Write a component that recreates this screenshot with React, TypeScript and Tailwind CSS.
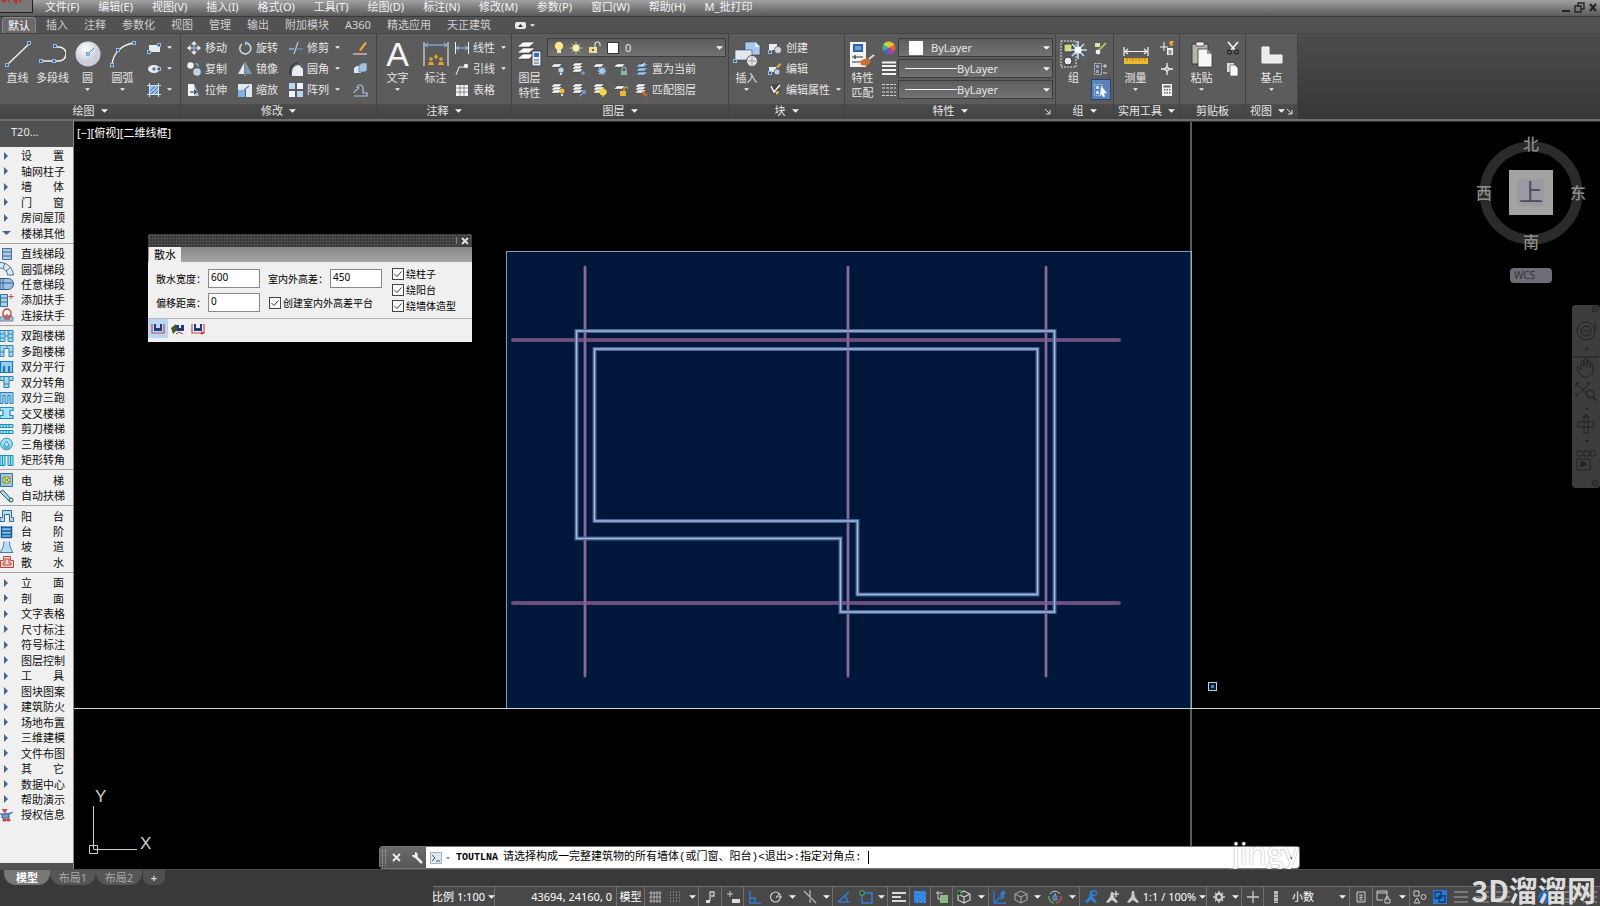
import { clsx } from "clsx";
import type { ReactNode } from "react";

const W = "#f2f2f2";
const B = "#8fc1f5";

const sheet = (x: number, y: number) => (
  <path d={`M${x + 3} ${y}h8l-3 3h-8z`} fill="#fff" stroke="#333" strokeWidth=".4" />
);
const stack = (
  <>
    {sheet(0, 1)}
    {sheet(0, 4)}
    {sheet(0, 7)}
  </>
);
const node = (x: number, y: number) => (
  <rect x={x - 1.5} y={y - 1.5} width="3" height="3" fill="#3f5873" stroke="#8fbbe8" />
);

/* [width, height, drawing] */
const art: Record<string, [number, number, ReactNode]> = {
  line: [26, 26, <><path d="M3 23 24 3" stroke={W} strokeWidth="1.4" />{node(2, 24)}{node(24, 2)}</>],
  polyline: [27, 26, <><path d="M2 20h18a7 7 0 0 0 0-14h-4" fill="none" stroke={W} strokeWidth="1.5" />{node(2, 20)}{node(15, 20)}{node(16, 5)}</>],
  circle: [26, 26, <><defs><radialGradient id="ball" cx=".4" cy=".3"><stop stopColor="#fff" /><stop offset="1" stopColor="#c8cedb" /></radialGradient></defs><circle cx="13" cy="13" r="12.5" fill="url(#ball)" /><path d="M13 13l6-6" stroke="#5d8fc7" /><rect x="11.500" y="11.500" width="3" height="3" fill="#9cc3ee" stroke="#5d8fc7" strokeWidth=".7" /></>],
  arc: [26, 26, <><path d="M2 24C3 13 10 4 24 2" fill="none" stroke={W} strokeWidth="1.4" />{node(2, 24)}{node(8, 9)}{node(24, 2)}</>],
  rect: [14, 14, <><rect x="2" y="4" width="11" height="7" fill="#e8ebf0" />{node(2, 11)}{node(12, 4)}</>],
  ellipse: [14, 14, <><ellipse cx="7" cy="7" rx="6" ry="4" fill="#e8ebf0" /><path d="M7 5v4M5 7h4" stroke="#456" />{node(12, 7)}</>],
  hatch: [14, 14, <><rect x="3" y="3" width="8" height="8" fill="#9dbfe4" /><path d="M3 8l5-5M4 11l7-7M8 11l3-3" stroke="#3d73ad" /><path d="M2.500 0v14M11.500 0v14M0 2.500h14M0 11.500h14" stroke="#cfe3f7" /></>],
  move: [14, 14, <><path d="M7 0l3 3.500H4zM7 14l3-3.500H4zM0 7l3.500-3v6zM14 7l-3.500-3v6z" fill="#e8eef6" /><path d="M7 3v8M3 7h8" stroke={W} /><rect x="5.500" y="5.500" width="3" height="3" fill="#6ca0d8" /></>],
  rotate: [14, 14, <><path d="M8.500 2A5.500 5.500 0 1 1 4 3" fill="none" stroke="#d6dde6" strokeWidth="1.500" /><path d="M7 0l4 2-4 2.500z" fill={B} /></>],
  trim: [14, 14, <><path d="M0 8h5" stroke={B} strokeWidth="1.300" /><path d="M8 8h6" stroke="#5d8fc7" strokeWidth="1.300" /><path d="M5 13 9 1" stroke="#a8c6e6" strokeWidth="1.300" /></>],
  erase: [15, 14, <><path d="M6 9l6-8 2 1-6 8z" fill="#e9a63a" /><path d="M4 12l2-3 2 1.500-2 2z" fill="#b8462c" /><path d="M0 13h14" stroke={W} /></>],
  copy: [14, 14, <><circle cx="3.500" cy="3.500" r="3.200" fill="#f4f4f4" /><circle cx="10" cy="10" r="3.800" fill="#bcd3ee" /><path d="M8 2h3v3" fill="none" stroke={B} /></>],
  mirror: [14, 14, <><path d="M6 1v11H0z" fill="#e4e8ee" /><path d="M8 1v11h6z" fill="#7f9cbc" /><path d="M7 0v14" stroke="#c9d8ea" strokeWidth=".7" /></>],
  fillet: [14, 14, <><path d="M3 14V10a7 7 0 0 1 7-7l4 4v7z" fill="#e9edf3" /><path d="M1 13V9a8 8 0 0 1 8-8" fill="none" stroke="#20344c" strokeWidth="1.200" /></>],
  explode: [15, 14, <><path d="M1 6l3-2h4v7H1z" fill="#d9e6f3" /><path d="M6 3l3-2h5v7l-2 2H6z" fill="#a3c0dd" stroke="#45617f" strokeWidth=".6" /></>],
  stretch: [14, 14, <><path d="M1 1h6v12H1z" fill="#f4f4f4" /><path d="M7 1l5 12H7z" fill="#a9c7e8" /><path d="M3 9h6M7 7l2.500 2L7 11" fill="none" stroke="#222" /></>],
  scale: [14, 14, <><path d="M0 1h14v13H8V7H0z" fill="#dfe8f2" /><rect x="0" y="7" width="7" height="7" fill="#7fb1e8" /><path d="M6 7l5-4" stroke="#27496f" /></>],
  array: [14, 14, <><path d="M0 0h6v6H0zM8 8h6v6H8z" fill="#b7d4f3" /><path d="M8 0h6v6H8zM0 8h6v6H0z" fill="#f0f3f7" /></>],
  offset: [15, 14, <path d="M1 13h13v-3h-4V5a3 3 0 0 0-6 0M1 10c0-4 5-2 5-6" fill="none" stroke="#a9c8e8" strokeWidth="1.200" />],
  dim: [26, 26, <><path d="M1 1v24M25 1v24" stroke={W} /><path d="M2 4h22M5 2L2 4l3 2M21 2l3 2-3 2" fill="none" stroke={B} /><path d="M13 13l2 3-2 2-2-2zM7 16l3 1-1 3-3-1zM19 16l-3 1 1 3 3-1zM6 21h4l1 3H5zM20 21h-4l-1 3h6z" fill="#e8a628" /></>],
  linear: [14, 14, <><path d="M.5 1v12M13.500 1v12" stroke={W} /><path d="M1 7h12M4 5L1 7l3 2M10 5l3 2-3 2" fill="none" stroke={B} /></>],
  leader: [14, 14, <><path d="M1 13l3-8h5" fill="none" stroke={W} /><circle cx="11" cy="4" r="2.200" fill={W} /></>],
  table: [14, 14, <><path d="M1 2h12v11H1z" fill="#f4f4f4" /><path d="M1 5h12M1 9h12M5 2v11M9 2v11" stroke="#777" strokeWidth=".8" /></>],
  layerProps: [26, 26, <><path d="M6 1h12l-6 5H0zM6 7h12l-6 5H0zM6 13h12l-6 5H0z" fill="#fff" stroke="#333" strokeWidth=".6" /><path d="M15 10h9v15h-9z" fill="#e8edf5" stroke="#345" /><path d="M17 12h5v4h-5z" fill="#3f6db2" /><path d="M17 19h5M17 22h5" stroke="#555" /></>],
  layOff: [14, 14, <>{sheet(0, 2)}<circle cx="10" cy="8" r="2.600" fill="#b5d7f8" /><path d="M9 11h2v2H9z" fill="#ddd" /></>],
  layIso: [14, 14, <>{stack}<circle cx="11" cy="11" r="1.800" fill="#6fa4dc" /></>],
  layFrz: [14, 14, <>{sheet(0, 2)}<path d="M9 5v8M5 9h8M6 6l6 6M12 6l-6 6" stroke="#a7d0f7" strokeWidth="1.300" /></>],
  layLock: [14, 14, <>{sheet(0, 2)}<path d="M8 9V7a2 2 0 0 1 4 0v2" fill="none" stroke="#9cc" /><rect x="7" y="9" width="6" height="4" fill="#8cb4a8" /></>],
  layCur: [14, 14, <><path d="M4 2h9l-4 3H1zM4 6h9l-4 3H1zM4 10h9l-4 3H1z" fill="#9dc3ea" stroke="#2c4d70" strokeWidth=".5" /><path d="M6 4l4-3" stroke="#fff" /></>],
  layOn: [14, 14, <>{stack}<circle cx="11" cy="8" r="2.500" fill="#f3b93c" /><path d="M10 11h2v2h-2z" fill="#ddd" /></>],
  layUniso: [14, 14, <>{stack}<path d="M8 13l5-5M10 8h3v3" fill="none" stroke="#6fa4dc" strokeWidth="1.300" /></>],
  layThaw: [14, 14, <>{stack}<circle cx="10" cy="9" r="3.500" fill="#f5d64a" /><path d="M10 4v10M5 9h10" stroke="#f5d64a" /></>],
  layUnlock: [14, 14, <>{sheet(0, 3)}<path d="M10 8V6a2 2 0 0 1 4 0" fill="none" stroke="#f0b43c" /><rect x="6" y="8" width="6" height="5" fill="#f0b43c" /></>],
  layMatch: [14, 14, <>{stack}<path d="M7 8l6 3-2 3-4-3z" fill="#d0652c" /></>],
  insert: [28, 27, <><path d="M12 1h11l4 4v9H12z" fill="#a9c8ef" stroke="#345" strokeWidth=".6" /><path d="M22 1v5h5" fill="#dcebfa" /><path d="M2 9h17v10H2z" fill="#e4e7ee" stroke="#345" strokeWidth=".6" /><circle cx="19" cy="20" r="5.500" fill="#e6e8ec" stroke="#555" /><path d="M15 20h8M19 16v8" stroke="#999" />{node(2, 20)}</>],
  create: [14, 14, <><path d="M1 3h8v6H1z" fill="#e8ecf2" /><circle cx="10" cy="9" r="3.500" fill="#cfd9e6" stroke="#444" strokeWidth=".6" />{node(2, 11)}</>],
  editBlock: [14, 14, <><path d="M1 5h7v5H1z" fill="#e8ecf2" /><circle cx="9" cy="10" r="3" fill="#b9cfe8" stroke="#444" strokeWidth=".6" /><path d="M8 5l4-4 1.500 1.500-4 4z" fill="#e8a63c" />{node(2, 11)}</>],
  attr: [14, 14, <><path d="M1 2l4 10 8-3-3-8z" fill="#444" /><path d="M3 3l3 6 6-7" fill="none" stroke={W} strokeWidth="1.600" /><path d="M7 9l5-1-3 4z" fill="#f1c13a" /></>],
  matchProps: [27, 27, <><path d="M1 1h16v25H1z" fill="#f3f4f7" /><path d="M4 3h10v8H4z" fill="#2f62a5" /><path d="M6 5h6v4H6z" fill="#6fa0da" /><path d="M3 16h11M3 21h8M6 14v4" stroke="#333" strokeWidth="1.200" /><path d="M11 20l7-3 4 3-4 5-6-1z" fill="#c9702c" /><path d="M20 18l5-4" stroke="#ddd" strokeWidth="2" /></>],
  wheel: [14, 14, <><path d="M7 7V.5A6.500 6.500 0 0 1 12.600 4z" fill="#f3b43c" /><path d="M7 7l5.600-3a6.500 6.500 0 0 1 0 6.300z" fill="#e4603a" /><path d="M7 7l5.600 3.200A6.500 6.500 0 0 1 7 13.500z" fill="#b53f9c" /><path d="M7 7v6.500A6.500 6.500 0 0 1 1.400 10z" fill="#4a63c8" /><path d="M7 7l-5.600 3a6.500 6.500 0 0 1 0-6.300z" fill="#3fae8c" /><path d="M7 7L1.400 3.800A6.500 6.500 0 0 1 7 .5z" fill="#b8d84c" /></>],
  weights: [14, 15, <path d="M0 1.500h14M0 5h14M0 9h14M0 13h14" stroke={W} strokeWidth="2" />],
  types: [14, 14, <path d="M0 1.500h14M0 5h14M0 9h14M0 12.500h14" stroke="#d8d8d8" strokeDasharray="3 1" />],
  group: [27, 28, <><path d="M1 1h15v26H1z" fill="none" stroke="#ddd" strokeDasharray="2 1" /><path d="M4 4h8v8H4z" fill="#d6d980" stroke="#333" /><circle cx="8" cy="21" r="4" fill="#e6e9f0" stroke="#333" /><path d="M18 1v18M9 10h18M12 4l12 12M24 4 12 16" stroke="#bfe3fb" strokeWidth="1.500" /><circle cx="18" cy="10" r="3.500" fill="#fff" /></>],
  groupEdit: [14, 14, <><path d="M1 2h5v4H1z" fill="#dfe1b0" /><circle cx="4" cy="11" r="2.400" fill={W} /><path d="M5 9l7-7" stroke="#b9b45c" strokeWidth="2" /></>],
  ungroup: [14, 14, <><path d="M.5 1.500h7v11h-7z" fill="none" stroke="#b9c8d8" strokeDasharray="2 1" /><path d="M2 3h3v3H2zM2 8h3v3H2z" fill="#86a8cc" /><path d="M9 4h4M11 2v4M9 11h4" stroke="#ddd" /></>],
  groupSel: [14, 14, <><path d="M.5 1.500h8v11h-8z" fill="none" stroke="#9fb9d6" strokeDasharray="2 1" /><path d="M2 3h3v3H2zM2 8h3v3H2z" fill="#c9dbee" /><path d="M7 3l6 7-3 .5 1 3-2 .5-1-3-2 2z" fill="#fff" /></>],
  measure: [26, 26, <><path d="M1 6v9M25 6v9M2 10.500h22M5 8l-3 2.500L5 13M21 8l3 2.500-3 2.500" fill="none" stroke={W} strokeWidth="1.200" /><path d="M1 17h24v6H1z" fill="#f0b92e" /><path d="M4 17v3M7 17v2M10 17v3M13 17v2M16 17v3M19 17v2M22 17v3" stroke="#8a6410" strokeWidth=".8" /></>],
  quickCalc: [14, 14, <><path d="M4 1v9M0 6h8" stroke={W} /><path d="M7 7h6v7H7z" fill={W} /><path d="M8 10h4M8 12h4M10 9v5" stroke="#555" strokeWidth=".7" /><path d="M10 0h4l-2 3h2l-4 3 1-3H9z" fill="#f1b02c" /></>],
  point: [14, 14, <><path d="M7 1v12M1 7h12" stroke={W} strokeWidth="1.300" /><circle cx="7" cy="7" r="2" fill="#aaa" stroke={W} /></>],
  calc: [14, 14, <><path d="M2 1h10v12H2z" fill={W} /><path d="M3.500 2.500h7v2h-7zM4 6h1.500v1.500H4zM6.500 6H8v1.500H6.500zM9 6h1.500v1.500H9zM4 9h1.500v1.500H4zM6.500 9H8v1.500H6.500zM9 9h1.500v1.500H9z" fill="#666" /></>],
  paste: [22, 27, <><path d="M1 3h16v20H1z" fill="#b9b3ac" stroke="#3a3a3a" /><path d="M5 1h8v4H5z" fill="#f0f0f0" stroke="#444" strokeWidth=".8" /><path d="M7 8h9l5 5v13H7z" fill="#f7f7f7" stroke="#333" strokeWidth=".8" /><path d="M16 8v5h5z" fill="#999" /></>],
  cut: [14, 14, <><path d="M2 1l7 8M12 1L5 9" stroke={W} strokeWidth="1.700" /><circle cx="3.500" cy="11" r="2" fill="none" stroke="#2c2c2c" strokeWidth="1.300" /><circle cx="10.500" cy="11" r="2" fill="none" stroke="#2c2c2c" strokeWidth="1.300" /></>],
  copyClip: [14, 14, <><path d="M1 1h7v9H1z" fill="#ddd" /><path d="M4 3h5l3 3v8H4z" fill="#f7f7f7" stroke="#555" strokeWidth=".7" /></>],
  base: [22, 26, <path d="M1 6h7v8h13v8H1z" fill="#e9eaed" stroke="#f8f8f8" />],
  bulb: [10, 14, <><circle cx="5" cy="5" r="4.200" fill="#fbe88a" /><path d="M3 8h4v4H3z" fill="#efe6b8" /></>],
  sun: [12, 12, <><path d="M6 0v12M0 6h12M2 2l8 8M10 2l-8 8" stroke="#cfc995" /><circle cx="6" cy="6" r="3.500" fill="#f1ecb0" /></>],
  unlock: [13, 13, <><path d="M7 6V3.500a2.500 2.500 0 0 1 5 0V5" fill="none" stroke="#ddd" strokeWidth="1.200" /><path d="M1 6h8v6H1z" fill="#f0dc90" /><path d="M4 8h2v2H4z" fill="#665" /></>],

  // status bar
  sGrid: [14, 14, <path d="M3 1v12M6 1v12M9 1v12M12 1v12M1 3h12M1 7h12M1 11h12" stroke="#b8b8b8" strokeWidth=".9" />],
  sDots: [14, 14, <path d="M1 2h12M1 5h12M1 8h12M1 11h12" stroke="#a8a8a8" strokeDasharray="1 2" />],
  sInfer: [14, 14, <><path d="M7 11V2h4v4H8" fill="none" stroke="#ccc" strokeWidth="1.300" /><path d="M3 10h4v3H3z" fill="#ddd" /></>],
  sDyn: [14, 14, <><path d="M1 4h6M4 1v6" stroke="#ccc" /><path d="M6 9h8v4H6z" fill="#ddd" /></>],
  sOrtho: [14, 14, <path d="M2 1v12h11M2 8h5v5" fill="none" stroke="#2f7dd8" strokeWidth="1.400" />],
  sPolar: [14, 14, <><circle cx="6.500" cy="7" r="5" fill="none" stroke="#ccc" strokeWidth="1.200" /><path d="M7 7h6M7 7l3-3" stroke="#ccc" /></>],
  sIso: [14, 14, <path d="M1 1l12 12M7 0v6M7 9v4" stroke="#bbb" strokeWidth="1.200" />],
  sTrack: [14, 14, <path d="M1 12h12M1 12 12 2M8 5l3 7" fill="none" stroke="#2f7dd8" strokeWidth="1.500" />],
  sSnap: [14, 14, <><path d="M3 3h10v10H3z" fill="none" stroke="#2f7dd8" strokeWidth="1.500" /><path d="M1 1h4v4H1z" fill="#333" stroke="#4fae5c" /></>],
  sLw: [16, 14, <path d="M1 3h14M1 7h9M1 11h14" stroke="#d8d8d8" strokeWidth="2" />],
  sTrans: [14, 14, <><path d="M1 1h12v12H1z" fill="#3b8eea" /><path d="M1 5l4-4M1 9l8-8M1 13 13 1M5 13l8-8M9 13l4-4" stroke="#1c4d8a" strokeDasharray="1 1" /></>],
  sCycle: [14, 14, <><path d="M5 5h8v8H5z" fill="#8fb583" /><path d="M1 3h7M3 1v8h3" fill="none" stroke="#ccc" /></>],
  sCube: [14, 14, <><path d="M7 1l6 3v6l-6 3-6-3V4zM1 4l6 3 6-3M7 7v6" fill="none" stroke="#ccc" strokeWidth="1.200" /><path d="M0 1h4v4H0z" fill="#333" stroke="#4fae5c" /></>],
  sUcs: [14, 14, <><path d="M1 1v12h12M1 13l6-6" fill="none" stroke="#2f7dd8" strokeWidth="1.300" /><path d="M10 0l3 3-3 3 2 1-5 3 1-4-1-2z" fill="#2f7dd8" /></>],
  sCube2: [14, 14, <path d="M7 1l6 3v6l-6 3-6-3V4zM1 4l6 3 6-3M7 7v6" fill="none" stroke="#aaa" />],
  sGizmo: [14, 14, <><path d="M2 4a6 6 0 0 1 10 0" fill="none" stroke="#ccc" /><path d="M1 6a6 6 0 0 0 5 7" fill="none" stroke="#5cae5c" strokeWidth="1.300" /><path d="M13 6a6 6 0 0 1-5 7" fill="none" stroke="#d0524c" strokeWidth="1.300" /><path d="M7 3v7M5 7l2-3 2 3v3H5z" fill="none" stroke="#5f9fe8" /></>],
  sAnno: [14, 14, <><path d="M6 1h2l1 6 4 5-2 1-4-3-4 3-2-1 4-5z" fill="#2f7dd8" /><circle cx="10" cy="3" r="2.500" fill="none" stroke="#2f7dd8" strokeWidth="1.300" /></>],
  sAnno2: [14, 14, <><path d="M6 2h2l1 5 4 5-2 1-4-3-4 3-2-1 4-5z" fill="#ccc" /><path d="M11 1v6M8 4h6" stroke="#ccc" strokeWidth="1.500" /></>],
  sAnno3: [14, 14, <path d="M6 1h2l1 6 4 5-2 1-4-3-4 3-2-1 4-5z" fill="#c8c8c8" />],
  sGear: [12, 12, <><circle cx="6" cy="6" r="3.200" fill="none" stroke="#ccc" strokeWidth="2.400" /><path d="M6 0v2M6 10v2M0 6h2M10 6h2M2 2l1 1M9 9l1 1M2 10l1-1M9 3l1-1" stroke="#ccc" strokeWidth="1.500" /></>],
  sPlus: [14, 14, <path d="M7 1v12M1 7h12" stroke="#ccc" strokeWidth="1.300" />],
  sBar: [6, 14, <path d="M3 1v12" stroke="#bbb" strokeWidth="4" strokeDasharray="3 .5" />],
  sProps: [10, 12, <><path d="M1 1h8v10H1z" fill="none" stroke="#ccc" /><path d="M3 4h4M3 6.500h4M3 9h4M5 4v5" stroke="#ccc" strokeWidth=".8" /></>],
  sLock: [16, 14, <><path d="M11 8V1H1v9h6M1 3h10" fill="none" stroke="#ccc" /><path d="M9 9h5v4H9zM10 9V7h3" fill="none" stroke="#ccc" /></>],
  sShapes: [14, 14, <><path d="M1 1h5v5H1zM4 8l3 5H1z" fill="none" stroke="#ccc" /><circle cx="10.500" cy="7" r="2.500" fill="none" stroke="#ccc" /></>],
  sIsolate: [14, 14, <><path d="M0 0h14v14H0z" fill="#2b77d0" /><path d="M2 2h6v6H2zM6 6h6v6H6z" fill="none" stroke="#0f3a73" strokeWidth="1.300" /></>],
  sMenu: [14, 14, <path d="M0 2h14M0 7h14M0 12h14" stroke="#aaa" />],
  sSlash: [14, 14, <path d="M2 12l8-9" stroke="#999" />],
  sDisc: [16, 14, <circle cx="8" cy="7" r="6.500" fill="#1f6fd6" />],
  sScreen: [16, 14, <path d="M1 2h14v10H1zM1 9h9" fill="none" stroke="#bbb" />],

  // side menu
  st1: [14, 14, <path d="M2.500 1.500h9v11h-9zM2 5h10M2 9h10" fill="#a9cbe9" stroke="#456d99" />],
  st2: [14, 14, <path d="M0 .5c8 0 13 6 13.500 12.500h-6C7.500 9 4 6 0 6M5 1L3 7M11 5L6 9" fill="#dbe9f5" stroke="#4a6f92" />],
  st3: [14, 14, <path d="M0 1.500h8a5 5 0 0 1 0 11H0zM3 2v10M0 6h13" fill="#9fc1e4" stroke="#3a5d8c" />],
  st4: [14, 14, <><path d="M.5 1.500h7v12h-7zM0 5h8M0 9h8" fill="#a9d5ec" stroke="#2f6e8f" /><path d="M11 1v5M8.500 3.500h5" stroke="#c44" /></>],
  st5: [14, 14, <><path d="M0 9h13v4H0z" fill="#a9c6e6" stroke="#6986ab" /><path d="M3 8V5a4 4 0 0 1 8 0v3H9v4M3 8h2v4M7 12V6" fill="none" stroke="#b0483c" strokeWidth="1.300" /></>],
  sa: [14, 14, <path d="M0 1.500h5v11H0zM8 1.500h5v11H8zM0 5h5M0 9h5M8 5h5M8 9h5M5 1.500h3M5 7h3" fill="#9fd8f4" stroke="#2f86b5" />],
  sb: [14, 14, <path d="M0 1.500h13v11H9v-8H4v8H0zM0 8h4M9 8h4M7 1v3" fill="#9fd8f4" stroke="#3f83a8" />],
  sc: [14, 14, <path d="M.5 1.500h12v11H9.500v-6h-1v6h-4v-6h-1v6h-3z" fill="#8ed1f4" stroke="#2476ad" strokeWidth="1.200" />],
  sd: [14, 14, <path d="M0 1.500h13v4H9v7H4v-7H0zM4 9h5M4 2v3M9 2v3" fill="#a3daf5" stroke="#2f7fae" />],
  se: [14, 14, <path d="M0 1.500h13v11h-3v-8H8v8H5v-8H3v8H0z" fill="#8ed1f4" stroke="#2f7fae" />],
  sf: [14, 14, <path d="M0 1.500h13v3h-3v5h3v3H0v-3h3v-5H0z" fill="#a5e2f6" stroke="#1e90b8" strokeWidth="1.200" />],
  sg: [14, 14, <path d="M0 2.500h13v3H0zM0 8.500h13v3H0zM3 2v4M6 2v4M9 2v4M3 8v4M6 8v4M9 8v4" fill="#a5e2f6" stroke="#1e90b8" />],
  sh: [14, 14, <><circle cx="6.500" cy="7" r="5.800" fill="#a5e2f6" stroke="#1e90b8" /><path d="M6.500 4l3 5h-6zM3 11h7" fill="#e6f7fc" stroke="#1e90b8" /></>],
  si: [14, 14, <path d="M0 2.500h5v10H0zM8 2.500h5v10H8zM5 2.500h3M2.500 3v9M10.500 3v9" fill="#9be0f5" stroke="#1e8fb8" />],
  lift: [14, 14, <><path d="M.5 .5h12v13H.5z" fill="#9fc9e8" stroke="#3d6f96" /><path d="M3 4h7v6H3z" fill="#f2ef86" stroke="#7e8a3a" /><path d="M4 5l5 4M9 5L4 9" stroke="#56793e" /></>],
  escal: [14, 14, <><path d="M0 3l3-2 9 10-2 2z" fill="#a9d6ea" stroke="#355f7a" /><circle cx="11" cy="11" r="2" fill="#cde5c8" stroke="#355" /></>],
  balcony: [14, 14, <path d="M2.500 1.500h9v7h2v4h-4v-7h-5v7H0v-4h2.500z" fill="#b5ddf2" stroke="#336a92" />],
  steps: [14, 14, <><path d="M1.500 1h10v12h-10z" fill="#7fc0e6" /><path d="M1.500 1v12M11.500 1v12M2 2.500h9M2 6h9M2 9.500h9M2 12.500h9" fill="none" stroke="#1c5a95" strokeWidth="1.500" /></>],
  ramp: [14, 14, <path d="M4 1.500C4 6 2 10 0 12.500h13C11 10 9.500 6 9.500 1.500" fill="#b9dcf2" stroke="#447da8" />],
  apron: [14, 14, <path d="M.5 12.500v-7h3v-4h7v4h3v7zM3 10V8h2V4h4v4h2v2z" fill="#f0d3cf" stroke="#b2483f" />],
  cart: [14, 14, <><path d="M0 6h10l3-2M2 6v4h7V6" fill="#7aa0d0" stroke="#385f92" /><path d="M2 1l3 4 2-4M3 11h3v2H3zM7 11h3v2H7z" fill="#d44b4b" stroke="#a33" strokeWidth=".7" /></>],
};

function Icon({ name }: { name: string }) {
  const [w, h, drawing] = art[name];
  return (
    <svg width={w} height={h} viewBox={`0 0 ${w} ${h}`} fill="none" className="shrink-0" aria-hidden="true">
      {drawing}
    </svg>
  );
}

function Caret({ small }: { small?: boolean }) {
  return (
    <svg
      viewBox="0 0 8 4"
      className={clsx("shrink-0 fill-gray-100", small ? "h-[3px] w-[5px]" : "h-1 w-[7px]")}
      aria-hidden="true"
    >
      <path d="M0 0h8L4 4z" />
    </svg>
  );
}

function Panel({ title, width, caret = true, launcher, children }: {
  title: string;
  width: string;
  caret?: boolean;
  launcher?: boolean;
  children: ReactNode;
}) {
  return (
    <section className={clsx("flex shrink-0 flex-col border-r border-[#434343] bg-[#5c5c5c]", width)}>
      <div className="flex h-[70px] pt-[3px]">{children}</div>
      <button className="relative flex h-[15px] items-center justify-center gap-[6px] bg-linear-to-b from-[#4b4b4b] to-[#444] pb-[2px]">
        <span>{title}</span>
        {caret && <Caret />}
        {launcher && (
          <svg width="6" height="6" viewBox="0 0 6 6" className="absolute bottom-1 right-1" aria-hidden="true">
            <path d="M0 0l5 5M5 1v4H1" fill="none" stroke="#ddd" />
          </svg>
        )}
      </button>
    </section>
  );
}

function BigButton({ icon, label, width = "w-[35px]", caret, children }: {
  icon?: string;
  label: string[];
  width?: string;
  caret?: boolean;
  children?: ReactNode;
}) {
  return (
    <button className={clsx("flex shrink-0 flex-col items-center pt-[3px]", width)}>
      <span className="flex h-7 items-center justify-center">{icon ? <Icon name={icon} /> : children}</span>
      <span className="mt-[2px] flex flex-col leading-[15px]">
        {label.map((l) => (
          <span key={l}>{l}</span>
        ))}
      </span>
      {caret && <span className="mt-[3px]"><Caret small /></span>}
    </button>
  );
}

type Tool = { icon: string; label?: string; caret?: boolean };

function ToolColumn({ tools, width, active }: { tools: Tool[]; width?: string; active?: string }) {
  return (
    <div className={clsx("flex shrink-0 flex-col", width)}>
      {tools.map((t) => (
        <button
          key={t.icon}
          aria-label={t.label ?? t.icon}
          className={clsx(
            "flex h-[21px] items-center gap-1 whitespace-nowrap",
            !t.label && !t.caret && "justify-center",
            active === t.icon && "border border-[#27456e] bg-[#5b83bb]"
          )}
        >
          <Icon name={t.icon} />
          {t.label && <span>{t.label}</span>}
          {t.caret && <span className="ml-[2px]"><Caret small /></span>}
        </button>
      ))}
    </div>
  );
}

function Combo({ label, value, children }: { label: string; value: string; children?: ReactNode }) {
  return (
    <div className="relative flex h-[19px] items-center border border-[#3d3d3d] bg-linear-to-b from-[#5d5d5d] to-[#727272] pl-[6px]">
      {children}
      <select aria-label={label} className="h-full min-w-0 flex-1 appearance-none bg-transparent outline-none">
        <option>{value}</option>
      </select>
      <span className="pointer-events-none absolute right-[2px] top-0 flex h-full items-center"><Caret /></span>
    </div>
  );
}

function Ribbon() {
  return (
    <div className="flex overflow-hidden border-b-2 border-[#6f6f6f] bg-linear-to-b from-[#4c4c4c] to-[#373737]">
      <Panel title="绘图" width="w-[181px]">
        <BigButton icon="line" label={["直线"]} />
        <BigButton icon="polyline" label={["多段线"]} />
        <BigButton icon="circle" label={["圆"]} caret />
        <BigButton icon="arc" label={["圆弧"]} caret />
        <ToolColumn
          width="ml-[7px]"
          tools={[{ icon: "rect", caret: true }, { icon: "ellipse", caret: true }, { icon: "hatch", caret: true }]}
        />
      </Panel>
      <Panel title="修改" width="w-[196px] [&>div]:pl-[6px]">
        <ToolColumn
          width="w-[51px]"
          tools={[{ icon: "move", label: "移动" }, { icon: "copy", label: "复制" }, { icon: "stretch", label: "拉伸" }]}
        />
        <ToolColumn
          width="w-[51px]"
          tools={[{ icon: "rotate", label: "旋转" }, { icon: "mirror", label: "镜像" }, { icon: "scale", label: "缩放" }]}
        />
        <ToolColumn
          width="w-16"
          tools={[
            { icon: "trim", label: "修剪", caret: true },
            { icon: "fillet", label: "圆角", caret: true },
            { icon: "array", label: "阵列", caret: true },
          ]}
        />
        <ToolColumn tools={[{ icon: "erase" }, { icon: "explode" }, { icon: "offset" }]} />
      </Panel>
      <Panel title="注释" width="w-[135px]">
        <BigButton label={["文字"]} width="w-[41px]" caret>
          <span className="font-['Liberation_Sans'] text-[34px] leading-[34px] text-gray-100">A</span>
        </BigButton>
        <BigButton icon="dim" label={["标注"]} />
        <ToolColumn
          width="ml-[2px]"
          tools={[
            { icon: "linear", label: "线性", caret: true },
            { icon: "leader", label: "引线", caret: true },
            { icon: "table", label: "表格" },
          ]}
        />
      </Panel>
      <Panel title="图层" width="w-[217px]">
        <BigButton icon="layerProps" label={["图层", "特性"]} />
        <div className="w-[179px]">
          <div className="flex h-[21px] flex-col justify-center">
            <Combo label="图层" value="0">
              <span className="mr-[6px] flex items-center gap-[6px]">
                <Icon name="bulb" />
                <Icon name="sun" />
                <Icon name="unlock" />
                <span className="size-3 border border-[#333] bg-white" />
              </span>
            </Combo>
          </div>
          {[
            { icons: ["layOff", "layIso", "layFrz", "layLock", "layCur"], label: "置为当前" },
            { icons: ["layOn", "layUniso", "layThaw", "layUnlock", "layMatch"], label: "匹配图层" },
          ].map((row) => (
            <div key={row.label} className="flex h-[21px] items-center">
              {row.icons.map((i) => (
                <button key={i} aria-label={i} className="flex w-[21px] justify-center">
                  <Icon name={i} />
                </button>
              ))}
              <button>{row.label}</button>
            </div>
          ))}
        </div>
      </Panel>
      <Panel title="块" width="w-[116px]">
        <BigButton icon="insert" label={["插入"]} caret />
        <ToolColumn
          width="ml-1"
          tools={[
            { icon: "create", label: "创建" },
            { icon: "editBlock", label: "编辑" },
            { icon: "attr", label: "编辑属性", caret: true },
          ]}
        />
      </Panel>
      <Panel title="特性" width="w-[211px]" launcher>
        <BigButton icon="matchProps" label={["特性", "匹配"]} />
        <ToolColumn width="w-[18px]" tools={[{ icon: "wheel" }, { icon: "weights" }, { icon: "types" }]} />
        <div className="flex w-[155px] flex-col gap-[2px] pt-px">
          <Combo label="颜色" value="ByLayer">
            <span className="mx-1 mr-2 size-[14px] bg-white" />
          </Combo>
          <Combo label="线宽" value="ByLayer">
            <span className="h-px w-[52px] bg-gray-100" />
          </Combo>
          <Combo label="线型" value="ByLayer">
            <span className="h-px w-[52px] bg-gray-100" />
          </Combo>
        </div>
      </Panel>
      <Panel title="组" width="w-[58px]">
        <BigButton icon="group" label={["组"]} />
        <ToolColumn
          width="w-5"
          active="groupSel"
          tools={[{ icon: "groupEdit" }, { icon: "ungroup" }, { icon: "groupSel" }]}
        />
      </Panel>
      <Panel title="实用工具" width="w-[66px]">
        <BigButton icon="measure" label={["测量"]} width="w-[43px]" caret />
        <ToolColumn width="w-5" tools={[{ icon: "quickCalc" }, { icon: "point" }, { icon: "calc" }]} />
      </Panel>
      <Panel title="剪贴板" width="w-[66px]" caret={false}>
        <BigButton icon="paste" label={["粘贴"]} width="w-[43px]" caret />
        <ToolColumn width="w-5" tools={[{ icon: "cut" }, { icon: "copyClip" }]} />
      </Panel>
      <Panel title="视图" width="w-[52px] [&>button]:pr-2" launcher>
        <BigButton icon="base" label={["基点"]} width="w-[51px]" caret />
      </Panel>
    </div>
  );
}

const MENUS = [
  "文件(F)", "编辑(E)", "视图(V)", "插入(I)", "格式(O)", "工具(T)", "绘图(D)",
  "标注(N)", "修改(M)", "参数(P)", "窗口(W)", "帮助(H)", "M_批打印",
];

const TABS = [
  "默认", "插入", "注释", "参数化", "视图", "管理", "输出", "附加模块", "A360", "精选应用", "天正建筑",
];

// [label, icon] - no icon means a collapsed group
const SIDE_MENU: [string, string?][][] = [
  [["设置"], ["轴网柱子"], ["墙体"], ["门窗"], ["房间屋顶"], ["楼梯其他", "open"]],
  [["直线梯段", "st1"], ["圆弧梯段", "st2"], ["任意梯段", "st3"], ["添加扶手", "st4"], ["连接扶手", "st5"]],
  [
    ["双跑楼梯", "sa"], ["多跑楼梯", "sb"], ["双分平行", "sc"], ["双分转角", "sd"], ["双分三跑", "se"],
    ["交叉楼梯", "sf"], ["剪刀楼梯", "sg"], ["三角楼梯", "sh"], ["矩形转角", "si"],
  ],
  [["电梯", "lift"], ["自动扶梯", "escal"]],
  [["阳台", "balcony"], ["台阶", "steps"], ["坡道", "ramp"], ["散水", "apron"]],
  [
    ["立面"], ["剖面"], ["文字表格"], ["尺寸标注"], ["符号标注"], ["图层控制"], ["工具"], ["图块图案"],
    ["建筑防火"], ["场地布置"], ["三维建模"], ["文件布图"], ["其它"], ["数据中心"], ["帮助演示"], ["授权信息", "cart"],
  ],
];

function SideMenu() {
  return (
    <aside className="flex w-[74px] shrink-0 flex-col border-r border-[#8a8a8a] bg-[#515151] pb-[6px]">
      <h2 className="h-[26px] shrink-0 pl-[11px] leading-[22px] text-gray-200">T20...</h2>
      <nav className="flex min-h-0 flex-1 flex-col bg-[#f0f0f0] pb-10 pt-px text-[#111]">
        {SIDE_MENU.map((group, g) => (
          <div key={g} className="contents">
            {g > 0 && <hr className="my-[2px] shrink-0 border-[#a3a3a3]" />}
            {group.map(([label, icon]) => (
              <button key={label} className="flex min-h-0 flex-1 items-center">
                <span className="flex w-[21px] shrink-0 items-center">
                  {icon && icon !== "open" ? (
                    <Icon name={icon} />
                  ) : (
                    <svg width="10" height="8" viewBox="0 0 10 8" className="ml-[2px]" fill="#44678f" aria-hidden="true">
                      <path d={icon ? "M0 2h9L4.500 6z" : "M2 0l4 4-4 4z"} />
                    </svg>
                  )}
                </span>
                <span className="flex w-[43px] justify-between whitespace-nowrap leading-none">
                  {label.length === 2 ? [...label].map((c) => <span key={c}>{c}</span>) : label}
                </span>
              </button>
            ))}
          </div>
        ))}
      </nav>
    </aside>
  );
}

function Check({ label }: { label: string }) {
  return (
    <label className="flex items-center gap-[2px] whitespace-nowrap leading-4">
      <span className="relative size-3">
        <input type="checkbox" defaultChecked className="peer block size-3 appearance-none border border-[#444] bg-white" />
        <svg viewBox="0 0 12 12" className="pointer-events-none absolute inset-0 hidden peer-checked:block" aria-hidden="true">
          <path d="M2.500 6l2.500 2.500 4.500-5" fill="none" stroke="#333" />
        </svg>
      </span>
      {label}
    </label>
  );
}

function Field({ id, label, value }: { id: string; label: string; value: string }) {
  return (
    <div className="flex h-[19px] items-center justify-between gap-[2px]">
      <label htmlFor={id} className="whitespace-nowrap">{label}</label>
      <input id={id} defaultValue={value} className="h-[19px] w-[52px] border border-[#888] bg-white px-[2px] pb-[3px] outline-none" />
    </div>
  );
}

function ApronDialog() {
  return (
    <div
      role="dialog"
      aria-label="散水"
      className="absolute left-[74px] top-[112px] w-[324px] overflow-hidden rounded-t bg-[#f0f0f0] text-[10px] text-black"
    >
      <div className="flex h-[13px] items-center justify-end gap-1 bg-[#3d3d3d] bg-[radial-gradient(#6a6a6a_1px,transparent_1px)] bg-[size:3px_3px] pr-[3px]">
        <span className="h-[7px] w-px bg-[#888]" />
        <button aria-label="关闭" className="bg-[#3d3d3d]">
          <svg width="8" height="8" viewBox="0 0 8 8" aria-hidden="true"><path d="M1 1l6 6M7 1L1 7" stroke="#ddd" strokeWidth="2" /></svg>
        </button>
      </div>
      <div className="flex h-[15px] bg-linear-to-b from-[#878787] to-[#a5a5a5] pl-px">
        <button className="bg-[#f0f0f0] px-[5px] text-[11px] leading-[15px]">散水</button>
      </div>
      <div className="flex h-14 gap-[10px] px-2">
        <div className="grid grid-cols-[104px_114px] content-start gap-x-2 gap-y-[5px] pt-[7px]">
          <Field id="apron-width" label="散水宽度：" value="600" />
          <Field id="level-diff" label="室内外高差：" value="450" />
          <Field id="offset-dist" label="偏移距离：" value="0" />
          <div className="flex h-[19px] items-center pl-px"><Check label="创建室内外高差平台" /></div>
        </div>
        <div className="pt-1">
          <Check label="绕柱子" />
          <Check label="绕阳台" />
          <Check label="绕墙体造型" />
        </div>
      </div>
      <div className="flex h-6 border-t border-[#b5b5b5]">
        {["任意绘制", "选择已有路径", "搜索自动生成"].map((name, i) => (
          <button
            key={name}
            aria-label={name}
            className={clsx("flex h-[19px] w-5 items-center justify-center", i === 0 && "bg-[#bcd6f2]")}
          >
            <svg width="14" height="12" viewBox="0 0 14 12" fill="none" aria-hidden="true">
              {i === 1 ? (
                <><path d="M4 2h9v6H5z" fill="#203a86" /><path d="M0 5l5-4 1 6-4 4z" fill="#4a5a24" /><path d="M5 11l3-2 4 2" stroke="#a33" /><path d="M8 2v3h2V2z" fill="#f0f0f0" /></>
              ) : (
                <><path d="M3 1v7h8V1H9v4H5V1z" fill="#203a86" /><path d="M1 1v9h12V1" stroke="#c04858" strokeWidth="1.200" /></>
              )}
              {i === 2 && <circle cx="11" cy="10" r="1.500" fill="#d33" />}
            </svg>
          </button>
        ))}
      </div>
    </div>
  );
}

function Compass() {
  return (
    <div className="absolute right-4 top-2 w-[106px]">
      <svg width="110" height="126" viewBox="0 0 110 126" className="-ml-[2px] block font-['Noto_Sans_CJK_SC']">
        <circle cx="55" cy="63" r="46.500" fill="none" stroke="#2b2b2b" strokeWidth="10" />
        <rect x="33" y="40" width="44" height="45" fill="#a3a3a1" />
        <rect x="41" y="49" width="27" height="27" fill="#9a9aa4" />
        <text x="55" y="71" textAnchor="middle" fontSize="24" fill="#4c4c58">上</text>
        <g fontSize="16" fontWeight="500" fill="#8d8d8d" textAnchor="middle">
          <text x="55" y="20">北</text>
          <text x="102" y="69">东</text>
          <text x="55" y="118">南</text>
          <text x="8" y="69">西</text>
        </g>
      </svg>
      <button className="mx-auto mt-3 block h-[15px] w-[42px] rounded bg-[#6d6d78] pl-1 text-left text-[10px] leading-[13px] text-[#33333c]">
        WCS
      </button>
    </div>
  );
}

function NavBar() {
  return (
    <div className="absolute right-0 top-[183px] w-7 rounded bg-[#3d3d3d]">
      <svg width="28" height="183" viewBox="0 0 28 183" fill="none" stroke="#222" aria-hidden="true">
        <circle cx="23" cy="4" r="3" /><path d="M21 4h4" />
        <circle cx="14" cy="26" r="9" /><circle cx="14" cy="26" r="5" /><path d="M23 16v9M11 26h6" />
        <path d="M13 43h4l-2 2zM13 103h4l-2 2zM13 135h4l-2 2z" fill="#222" stroke="none" />
        <path d="M1 52h26" />
        <path d="M7 68c-2-3-3-5-1-6l3 3V57c1-2 2-1 3 0v5-7c1-2 3-1 3 0v7-6c1-1 3-1 3 1v6-4c1-1 3-1 3 1v5c0 5-3 7-7 7-3 0-5-1-7-4z" />
        <path d="M4 78l14 14M18 78 4 92M4 78h4M4 78v4M18 78h-4M4 92v-4" /><circle cx="18" cy="89" r="4" /><path d="M21 92l3 3" strokeWidth="2" />
        <path d="M12 111h4v17h-4zM6 117h16v5H6z" /><path d="M14 109l-3 3h6z" />
        <path d="M5 146h5v5H5zM12 146h5v5h-5zM19 146h4v5h-4zM5 154h13v11H5z" /><path d="M9 156l6 3-6 3z" fill="#222" />
        <circle cx="23" cy="178" r="3" /><path d="M21 178h4" />
      </svg>
    </div>
  );
}

function Drawing() {
  const walls = [
    "M502.500 209H980.500V490H766.500V416.500H502.500z",
    "M520.500 227H963.500V472.500H783.500V399H520.500z",
  ];
  const axes = "M511 145V554M774 145V554M972 145V554";
  const rows = "M439 218H1045M439 481H1045";
  return (
    <svg className="absolute inset-0 size-full" fill="none" aria-hidden="true">
      <rect x="432.500" y="129.500" width="685" height="457" fill="#00173c" stroke="#7f9fb8" />
      <g strokeLinecap="round">
        <path d={rows} stroke="#67497a" strokeWidth="4" />
        <path d={axes} stroke="#6b5781" strokeWidth="3" />
        <path d={axes} stroke="#a583a6" strokeWidth="1" />
        <path d={rows} stroke="#7d5685" strokeWidth="1" />
      </g>
      {walls.map((d) => (
        <g key={d}>
          <path d={d} stroke="#47628f" strokeWidth="4" />
          <path d={d} stroke="#a3b9df" strokeWidth="1.500" />
        </g>
      ))}
      <path d="M1117 0V747" stroke="#b4b4b4" />
      <line x1="0" y1="586.500" x2="100%" y2="586.500" stroke="#d4d4d4" />
      <rect x="1134.500" y="560.500" width="8" height="8" fill="#0b1d33" stroke="#b9d3ea" />
      <rect x="1137" y="563" width="3" height="3" fill="#4c86c4" />
    </svg>
  );
}

function CommandLine() {
  return (
    <div className="absolute bottom-0 left-[305px] right-[300px] flex h-[23px] items-center rounded border border-[#777] bg-white text-black">
      <div className="flex h-full w-[46px] items-center gap-[10px] bg-linear-to-b from-[#6b6b6b] to-[#565656] pl-[2px]">
        <span className="-mr-1 h-4 w-1 border-x border-dotted border-[#aaa]" />
        <button aria-label="关闭">
          <svg width="9" height="9" viewBox="0 0 9 9" aria-hidden="true"><path d="M1 1l7 7M8 1L1 8" stroke="#eee" strokeWidth="1.800" /></svg>
        </button>
        <button aria-label="自定义">
          <svg width="12" height="12" viewBox="0 0 12 12" aria-hidden="true">
            <path d="M4 4l7 7" stroke="#eee" strokeWidth="2.500" />
            <path d="M1 3a3 3 0 0 0 5 2 3 3 0 0 0-2-5v2.500L3 3z" fill="#eee" />
          </svg>
        </button>
      </div>
      <svg width="20" height="12" viewBox="0 0 20 12" className="ml-1 shrink-0" aria-hidden="true">
        <path d="M.5 .5h11v11H.5z" fill="#dde6ee" stroke="#a9b4c0" />
        <path d="M2 3l3 3-3 3M6 9h4" fill="none" stroke="#4a5a70" />
        <path d="M16 5h4l-2 2.500z" fill="#888" />
      </svg>
      <label htmlFor="command" className="ml-[6px] whitespace-pre font-['Liberation_Mono','Noto_Sans_CJK_SC',monospace] text-[11px]">
        <b className="mr-[5px] text-[10px]">TOUTLNA</b>
        请选择构成一完整建筑物的所有墙体(或门窗、阳台)&lt;退出&gt;:指定对角点:
      </label>
      <span className="ml-[6px] h-[13px] w-px bg-black" />
      <input id="command" className="h-full min-w-0 flex-1 bg-transparent outline-none" />
      <span className="mr-[6px] h-[3px] w-[5px] rotate-180"><svg viewBox="0 0 8 4" className="block"><path d="M0 0h8L4 4z" /></svg></span>
      <span className="pointer-events-none absolute bottom-0 right-0 font-['Open_Sans'] text-[31px] leading-8 text-white [text-shadow:0_0_2px_#999]">
        jingy
      </span>
    </div>
  );
}

type StatusItem = { w: string; icon?: string; text?: string; caret?: boolean; sep?: boolean };

const STATUS: StatusItem[] = [
  { w: "w-[62px] justify-center", text: "比例 1:100", caret: true, sep: true },
  { w: "w-[122px] justify-end pr-1", text: "43694, 24160, 0", sep: true },
  { w: "w-[28px] justify-center", text: "模型", sep: true },
  { w: "w-5", icon: "sGrid" },
  { w: "w-[22px]", icon: "sDots" },
  { w: "w-3", caret: true, sep: true },
  { w: "w-[23px]", icon: "sInfer", sep: true },
  { w: "w-[22px]", icon: "sDyn", sep: true },
  { w: "w-[22px]", icon: "sOrtho" },
  { w: "w-5", icon: "sPolar" },
  { w: "w-[13px]", caret: true },
  { w: "w-[21px]", icon: "sIso" },
  { w: "w-[13px]", caret: true, sep: true },
  { w: "w-[22px]", icon: "sTrack" },
  { w: "w-[21px]", icon: "sSnap" },
  { w: "w-3", caret: true, sep: true },
  { w: "w-[22px]", icon: "sLw", sep: true },
  { w: "w-[21px]", icon: "sTrans", sep: true },
  { w: "w-[22px]", icon: "sCycle", sep: true },
  { w: "w-[22px]", icon: "sCube" },
  { w: "w-[14px]", caret: true, sep: true },
  { w: "w-[22px]", icon: "sUcs" },
  { w: "w-5", icon: "sCube2" },
  { w: "w-[13px]", caret: true },
  { w: "w-[21px]", icon: "sGizmo" },
  { w: "w-[15px]", caret: true, sep: true },
  { w: "w-[22px]", icon: "sAnno" },
  { w: "w-5", icon: "sAnno2" },
  { w: "w-[21px]", icon: "sAnno3" },
  { w: "w-16 justify-center", text: "1:1 / 100%", caret: true, sep: true },
  { w: "w-[23px]", icon: "sGear" },
  { w: "w-3", caret: true, sep: true },
  { w: "w-[22px]", icon: "sPlus", sep: true },
  { w: "w-6", icon: "sBar" },
  { w: "w-[62px] justify-between pl-1 pr-[3px]", text: "小数", caret: true, sep: true },
  { w: "w-[23px]", icon: "sProps", sep: true },
  { w: "w-[22px]", icon: "sLock" },
  { w: "w-[15px]", caret: true, sep: true },
  { w: "w-5", icon: "sShapes" },
  { w: "w-5", icon: "sIsolate" },
  { w: "w-[21px]", icon: "sMenu" },
  { w: "w-[21px]", icon: "sMenu" },
  { w: "w-[21px]", icon: "sMenu" },
  { w: "w-[21px]", icon: "sSlash" },
  { w: "w-[22px]", icon: "sDisc" },
  { w: "w-6", icon: "sScreen" },
  { w: "w-5", icon: "sMenu" },
];

function Footer() {
  return (
    <footer className="relative flex h-[37px] shrink-0 justify-between border-t border-[#4c4c4c] bg-[#393939]">
      <div className="flex items-start pl-1">
        {["模型", "布局1", "布局2"].map((name, i) => (
          <button
            key={name}
            className={clsx(
              "h-[15px] w-[46px] rounded-b-xl leading-[13px]",
              i === 0 ? "bg-[#787878] font-bold text-white" : "bg-[#565656] text-[#aaa]"
            )}
          >
            {name}
          </button>
        ))}
        <button className="ml-px h-[15px] w-[22px] rounded-b-lg bg-[#505050] font-bold leading-[13px] text-gray-300">+</button>
      </div>
      <div className="flex h-5 self-end border-t border-[#6e6e6e] bg-[#484848]">
        {STATUS.map(({ w, icon, text, caret, sep }, i) => (
          <button
            key={i}
            aria-label={text ?? icon ?? "更多"}
            className={clsx(
              "flex h-full shrink-0 items-center gap-[3px] whitespace-nowrap text-white",
              !text && "justify-center",
              w,
              sep && "border-r border-[#6e6e6e]"
            )}
          >
            {icon && <Icon name={icon} />}
            {text}
            {caret && <Caret />}
          </button>
        ))}
      </div>
      <p className="pointer-events-none absolute bottom-0 right-1 font-['Noto_Sans_CJK_SC'] text-[29px] font-bold leading-[34px] text-[#dcdcdc] [text-shadow:0_0_2px_#333]">
        3D溜溜网
      </p>
    </footer>
  );
}

export default function App() {
  return (
    <div className="flex h-screen flex-col overflow-hidden bg-black font-['Noto_Sans','Noto_Sans_CJK_SC',sans-serif] text-[11px] leading-[14px] text-[#e6e6e6]">
      <header className="flex h-[17px] shrink-0 items-start border-b border-[#3a3a3a] bg-linear-to-b from-[#a2a2a2] to-[#5a5a5a]">
        <div className="w-[33px] shrink-0">
          <svg width="33" height="13" viewBox="0 0 33 13" className="block" aria-hidden="true">
            <path d="M0 0h32v12H0z" fill="#777" />
            <path d="M0 12.500h32.500V0" fill="none" stroke="#1e1e1e" />
            <path d="M2 0l2 2 2-2M8 0l1 2M14 0l2 3 1-3M19 0l2 2" fill="none" stroke="#c8262c" strokeWidth="1.500" />
          </svg>
        </div>
        <nav className="flex gap-[19px] pl-3">
          {MENUS.map((m) => (
            <button key={m} className="whitespace-nowrap text-gray-100">{m}</button>
          ))}
        </nav>
        <div className="ml-auto pr-[2px] pt-[2px]">
          <svg width="36" height="11" viewBox="0 0 36 11" className="block" fill="none" stroke="#222" aria-hidden="true">
            <path d="M0 9h8" strokeWidth="2" />
            <path d="M16 4V1h6v6h-3M13 4h6v6h-6z" strokeWidth="1.300" />
            <path d="M28 2l6 7M34 2l-6 7" strokeWidth="2" />
          </svg>
        </div>
      </header>
      <nav className="flex h-[17px] shrink-0 items-end border-b border-[#464646] bg-[#525252] pl-[2px]">
        {TABS.map((t, i) => (
          <button
            key={t}
            className={clsx(
              "h-4 whitespace-nowrap leading-4",
              i === 0 ? "mr-[2px] rounded-t-sm border border-b-0 border-[#888] bg-[#696969] px-[5px] text-white" : "px-2 text-[#cfcfcf]"
            )}
          >
            {t}
          </button>
        ))}
        <button aria-label="最小化功能区" className="ml-4 flex h-4 items-center gap-1">
          <span className="flex h-[7px] w-[11px] items-center justify-center rounded-xs bg-gray-200">
            <svg width="5" height="3" viewBox="0 0 5 3" aria-hidden="true"><path d="M0 3h5L2.500 0z" fill="#333" /></svg>
          </span>
          <Caret small />
        </button>
      </nav>
      <Ribbon />
      <main className="flex min-h-0 flex-1">
        <SideMenu />
        <div className="relative flex-1 overflow-hidden border-t border-[#333] bg-black">
          <Drawing />
          <p className="relative pl-[3px] pt-1 text-white">[−][俯视][二维线框]</p>
          <ApronDialog />
          <Compass />
          <NavBar />
          <svg width="90" height="88" viewBox="0 -8 90 88" className="absolute bottom-0 left-[10px]" fill="none" stroke="#cfcfcf" aria-hidden="true">
            <path d="M9.500 17v43M9.500 60.500H53M5.500 56.500h8v8h-8z" />
            <g fill="#cfcfcf" stroke="none" fontSize="17" fontFamily="Liberation Sans">
              <text x="11" y="13">Y</text>
              <text x="56" y="60">X</text>
            </g>
          </svg>
          <CommandLine />
        </div>
      </main>
      <Footer />
    </div>
  );
}
